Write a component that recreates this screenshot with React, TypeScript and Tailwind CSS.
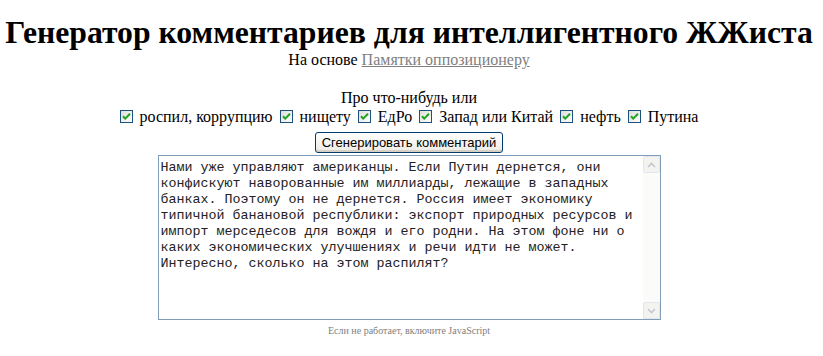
import { useState } from 'react';

const topics = ['роспил, коррупцию', 'нищету', 'ЕдРо', 'Запад или Китай', 'нефть', 'Путина'];

const comment =
  'Нами уже управляют американцы. Если Путин дернется, они конфискуют наворованные им миллиарды, лежащие в западных банках. Поэтому он не дернется. Россия имеет экономику типичной банановой республики: экспорт природных ресурсов и импорт мерседесов для вождя и его родни. На этом фоне ни о каких экономических улучшениях и речи идти не может. Интересно, сколько на этом распилят?';

function CheckBox({ checked }: { checked: boolean }) {
  return (
    <svg width="13" height="13" viewBox="0 0 13 13" className="shrink-0" aria-hidden="true">
      <defs>
        <linearGradient id="cbg" x1="0" y1="0" x2="1" y2="1">
          <stop offset="0" stopColor="#dcdcd5" />
          <stop offset="1" stopColor="#ffffff" />
        </linearGradient>
      </defs>
      <rect x="0.5" y="0.5" width="12" height="12" fill="url(#cbg)" stroke="#1c5180" />
      {checked && <path d="M3 6.2 L5.2 8.6 L10 3.8" fill="none" stroke="#21a121" strokeWidth="2" />}
    </svg>
  );
}

function Arrow({ up }: { up?: boolean }) {
  return (
    <div className="h-[17px] w-[17px] border border-[#e3e6ec] rounded-[2px] bg-[#f3f3f0] flex items-center justify-center">
      <svg width="9" height="6" viewBox="0 0 9 6" aria-hidden="true">
        <path d={up ? 'M1 5 L4.5 1.5 L8 5' : 'M1 1 L4.5 4.5 L8 1'} fill="none" stroke="#c3c8d0" strokeWidth="1.6" />
      </svg>
    </div>
  );
}

export default function App() {
  const [checked, setChecked] = useState(topics.map(() => true));

  return (
    <div className="min-h-screen bg-white text-black text-center font-['Liberation_Serif','Times_New_Roman',serif] pt-[14px] pr-[5px]">
      <h1 className="text-[31.7px] font-bold leading-[37px] whitespace-nowrap">
        Генератор комментариев для интеллигентного ЖЖиста
      </h1>
      <div className="text-base leading-[18px]">
        На основе{' '}
        <a href="#" className="text-[#808080] underline">
          Памятки оппозиционеру
        </a>
      </div>

      <div className="mt-[20px] text-base leading-[18px]">Про что-нибудь или</div>
      <div className="flex justify-center items-center text-base leading-[19px]">
        {topics.map((t, i) => (
          <label
            key={t}
            className="inline-flex items-center cursor-default"
            onClick={() => setChecked(c => c.map((v, j) => (j === i ? !v : v)))}
          >
            <span className={i === 0 ? 'mr-[7px]' : 'ml-[7px] mr-[7px]'}>
              <CheckBox checked={checked[i]} />
            </span>
            <span>{t}</span>
          </label>
        ))}
      </div>

      <button className="mt-[6px] h-[21px] px-[6px] rounded-[3px] border border-[#003c74] bg-gradient-to-b from-white to-[#ecebe4] shadow-[inset_0_-2px_0_#d6d0c5] text-[13px] leading-[17px] font-['Liberation_Sans',Arial,sans-serif] text-black">
        Сгенерировать комментарий
      </button>

      <div className="mx-auto mt-[1px] w-[503px] h-[165px] flex border border-[#7f9db9] bg-white">
        <textarea
          readOnly
          value={comment}
          className="flex-1 resize-none overflow-hidden outline-none bg-transparent px-[2px] pt-[4px] text-left text-[13.33px] leading-[16px] font-['Liberation_Mono','Courier_New',monospace] text-[#222]"
        />
        <div className="w-[17px] flex flex-col bg-[#fbfbf9]">
          <Arrow up />
          <div className="flex-1" />
          <Arrow />
        </div>
      </div>

      <div className="mt-[5px] text-[10px] leading-[12px] text-[#808080]">Если не работает, включите JavaScript</div>
    </div>
  );
}
